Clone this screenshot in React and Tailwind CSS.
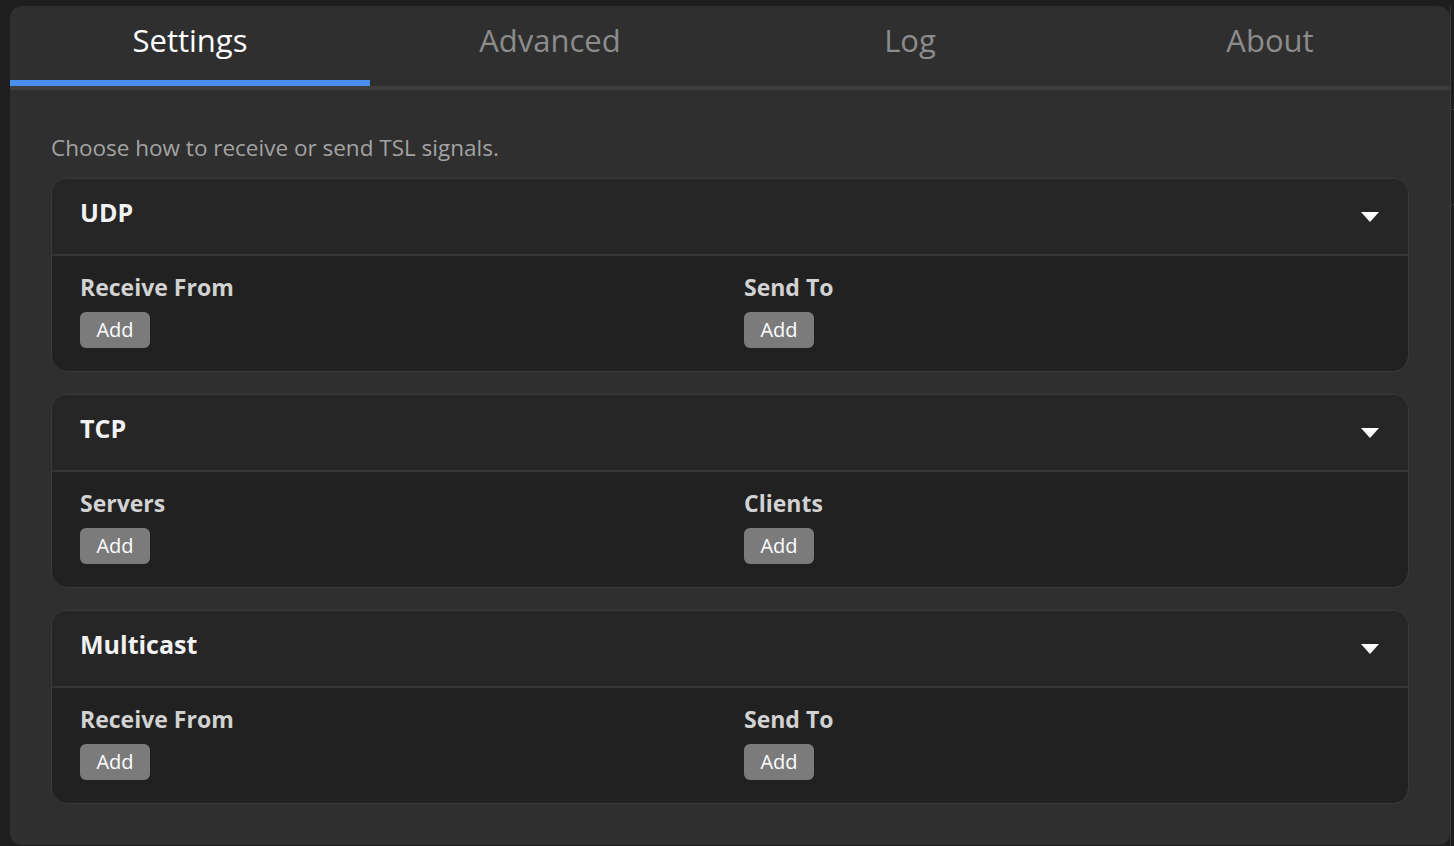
import React from "react";

const tabs = ["Settings", "Advanced", "Log", "About"];

const sections = [
  { title: "UDP", left: "Receive From", right: "Send To" },
  { title: "TCP", left: "Servers", right: "Clients" },
  { title: "Multicast", left: "Receive From", right: "Send To" },
];

function Caret() {
  return (
    <svg width="18" height="10" viewBox="0 0 18 10" className="block">
      <polygon points="0,0 18,0 9,10" fill="#ffffff" />
    </svg>
  );
}

function AddButton() {
  return (
    <button className="h-[36px] w-[70px] rounded-[6px] bg-[#7b7b7b] text-[20px] leading-none text-white">
      Add
    </button>
  );
}

function Section({ title, left, right }) {
  return (
    <div className="overflow-hidden rounded-[16px] border border-[#3a3a3a] bg-[#212121]">
      <div className="flex h-[77px] items-center justify-between border-b-2 border-[#363636] bg-[#262626] pl-[28px] pr-[29px]">
        <span className="pb-[8px] text-[25px] font-bold text-[#f2f2f2]">{title}</span>
        <Caret />
      </div>
      <div className="grid grid-cols-2 gap-x-[28px] px-[28px] pt-[16px] pb-[23px]">
        {[left, right].map((label, i) => (
          <div key={i} className="flex flex-col items-start gap-[10px]">
            <span className="text-[23px] font-bold leading-[30px] text-[#d2d2d2]">{label}</span>
            <AddButton />
          </div>
        ))}
      </div>
    </div>
  );
}

export default function App() {
  return (
    <div
      className="flex h-[846px] w-full bg-[#1e1e1e] pt-[6px] pl-[10px]"
      style={{ fontFamily: '"Open Sans", "Noto Sans", sans-serif' }}
    >
      <div className="h-[839px] w-[1440px] shrink-0 overflow-hidden rounded-[12px] bg-[#2f2f2f]">
        <div className="grid grid-cols-4 border-b-4 border-[#3d3d3d]">
          {tabs.map((t, i) => (
            <div key={t} className="flex flex-col">
              <div
                className={
                  "flex h-[74px] items-center justify-center pb-[6px] text-[31px] " +
                  (i === 0 ? "text-white" : "text-[#8c8c8c]")
                }
              >
                {t}
              </div>
              <div className={"h-[6px] " + (i === 0 ? "bg-[#4a8ff0]" : "")} />
            </div>
          ))}
        </div>
        <div className="px-[41px] pt-[44px]">
          <p className="mb-[16px] text-[22.5px] leading-[28px] text-[#a3a3a3]">
            Choose how to receive or send TSL signals.
          </p>
          <div className="flex flex-col gap-[22px]">
            {sections.map((s) => (
              <Section key={s.title} {...s} />
            ))}
          </div>
        </div>
      </div>
      <div className="flex h-full flex-1 flex-col border-l border-[#3a3a3a] bg-[#1c1c1c]">
        <div className="h-[104px] border-b border-[#3a3a3a]" />
        <div className="h-[95px] border-b border-[#3a3a3a]" />
      </div>
    </div>
  );
}
